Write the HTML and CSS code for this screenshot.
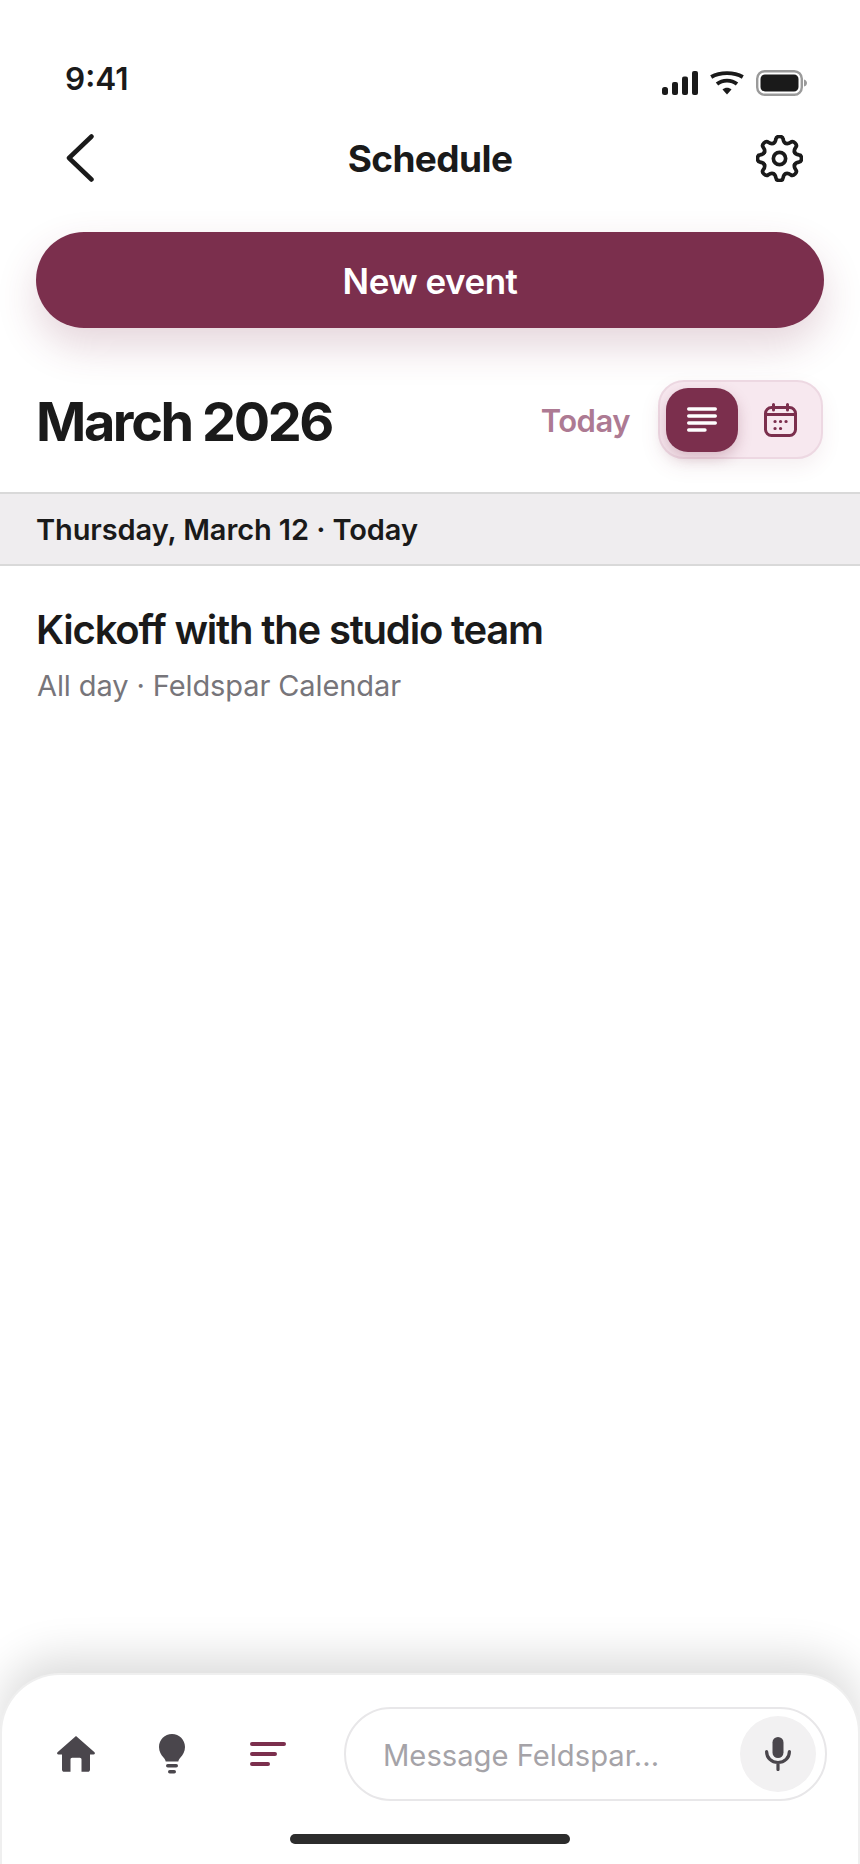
FILE: index.html
```html
<!DOCTYPE html>
<html lang="en">
<head>
    <meta charset="UTF-8">
    <meta name="viewport" content="width=device-width, initial-scale=1.0">
    <title>Schedule</title>
    <link rel="stylesheet" href="styles.css">
</head>
<body>
    <div class="status-bar">
        <span class="clock">9:41</span>
        <div class="status-icons">
            <svg width="36" height="24" viewBox="0 0 36 24" fill="#1a1a1a">
                <rect x="0" y="16" width="6" height="8" rx="2.5"/>
                <rect x="10" y="11" width="6" height="13" rx="2"/>
                <rect x="20" y="5.5" width="6" height="18.5" rx="2"/>
                <rect x="30" y="0" width="6" height="24" rx="2"/>
            </svg>
            <svg width="34" height="24" viewBox="0 0 34 24" fill="none" stroke="#1a1a1a" stroke-width="3.800">
                <path d="M1.200 6C10 .8 24 .8 32.800 6"/>
                <path d="M7 13C12.500 8.500 21.500 8.500 27 13"/>
                <path d="M17 23.500L12.500 18.500C15 16 19 16 21.500 18.500Z" fill="#1a1a1a" stroke="none"/>
            </svg>
            <svg width="51" height="26" viewBox="0 0 51 26">
                <rect x="1.2" y="1.2" width="44.600" height="23.600" rx="7.500" fill="none" stroke="#9a9a9a" stroke-width="2.400"/>
                <rect x="4.500" y="4.500" width="38" height="17" rx="4.500" fill="#1a1a1a"/>
                <path d="M48 9.500C50 10 51 11.500 51 13C51 14.500 50 16 48 16.500Z" fill="#9a9a9a"/>
            </svg>
        </div>
    </div>

    <div class="top-nav">
        <svg class="back-icon" width="47" height="48" viewBox="0 0 47 48" fill="none" stroke="#1a1a1a" stroke-width="4.500" stroke-linecap="round" stroke-linejoin="round">
            <path d="M34.500 2.500L12 24L34.500 45.500"/>
        </svg>
        <h1 class="page-title">Schedule</h1>
        <svg class="gear-icon" width="47" height="47" viewBox="1 1 46 46" fill="none" stroke="#1a1a1a" stroke-width="3.600" stroke-linecap="round">
            <path id="gear-tooth" d="M17.880 9.220C19.720 8.460 20.200 7 20.500 5C20.800 1.600 27.200 1.600 27.500 5C27.800 7 28.280 8.460 30.120 9.220"/>
            <use href="#gear-tooth" transform="rotate(45 24 24)"/>
            <use href="#gear-tooth" transform="rotate(90 24 24)"/>
            <use href="#gear-tooth" transform="rotate(135 24 24)"/>
            <use href="#gear-tooth" transform="rotate(180 24 24)"/>
            <use href="#gear-tooth" transform="rotate(225 24 24)"/>
            <use href="#gear-tooth" transform="rotate(270 24 24)"/>
            <use href="#gear-tooth" transform="rotate(315 24 24)"/>
            <circle cx="24" cy="24" r="6"/>
        </svg>
    </div>

    <button class="new-event" type="button">New event</button>

    <div class="month-row">
        <h2 class="month-title">March 2026</h2>
        <div class="month-actions">
            <span class="today-link">Today</span>
            <div class="view-switch">
                <div class="view-btn active">
                    <svg width="30" height="25" viewBox="0 0 30 25" fill="none" stroke="#fff" stroke-width="3.400" stroke-linecap="round">
                        <path d="M1.700 2H28.300M1.700 9H28.300M1.700 16H28.300M1.700 23H18"/>
                    </svg>
                </div>
                <div class="view-btn">
                    <svg width="33" height="34" viewBox="0 0 33 34" fill="none" stroke="#7b2f4d" stroke-width="3" stroke-linecap="round">
                        <rect x="1.500" y="4.500" width="30" height="28" rx="6"/>
                        <path d="M1.500 11.500H31.500M9.500 1.500V7M23.500 1.500V7"/>
                        <path d="M11 18.500H11.100M16.500 18.500H16.600M22 18.500H22.100M11 25.500H11.100M16.500 25.500H16.600" stroke-width="3.200"/>
                    </svg>
                </div>
            </div>
        </div>
    </div>

    <div class="day-header">Thursday, March 12 · Today</div>

    <div class="event-list">
        <div class="event">
            <div class="event-title">Kickoff with the studio team</div>
            <div class="event-meta">All day · Feldspar Calendar</div>
        </div>
    </div>

    <div class="bottom-panel">
        <div class="bottom-row">
            <div class="tab-icons">
                <svg width="48" height="36" viewBox="0 0 48 36" fill="#4a464c">
                    <path d="M24 0L42.500 16.200C43.400 17.100 42.800 18.500 41.500 18.500H38V33.500C38 34.900 37.100 35.800 35.700 35.800H29.500V23.500C29.500 22.500 28.900 21.800 27.800 21.800H20.200C19.100 21.800 18.500 22.500 18.500 23.500V35.800H12.300C10.900 35.800 10 34.900 10 33.500V18.500H6.500C5.200 18.500 4.600 17.100 5.500 16.200Z"/>
                </svg>
                <svg width="48" height="41" viewBox="0 0 48 41" fill="#4a464c">
                    <path d="M24 0C31.300 0 37 5.800 37 13C37 17.800 34.800 20.800 32.500 23.500C31.300 25 30.500 26.200 30.300 27.500H17.700C17.500 26.200 16.700 25 15.500 23.500C13.200 20.800 11 17.800 11 13C11 5.800 16.700 0 24 0Z"/>
                    <rect x="18" y="30" width="12" height="3.500" rx="1.750"/>
                    <rect x="20" y="36" width="8" height="3.500" rx="1.750"/>
                </svg>
                <svg width="48" height="26" viewBox="0 0 48 26" fill="none" stroke="#7b2f4d" stroke-width="4" stroke-linecap="round">
                    <path d="M8 3H40M8 13H31M8 23H24"/>
                </svg>
            </div>
            <div class="message-box">
                <span class="message-hint">Message Feldspar...</span>
                <div class="mic-btn">
                    <svg width="26" height="34" viewBox="0 0 26 34" fill="none" stroke="#4a464c" stroke-width="3.200" stroke-linecap="round">
                        <rect x="7.500" y="0" width="11" height="21" rx="5.500" fill="#4a464c" stroke="none"/>
                        <path d="M1.600 14.500C1.600 21 6.500 25.500 13 25.500C19.500 25.500 24.400 21 24.400 14.500M13 25.500V32.500"/>
                    </svg>
                </div>
            </div>
        </div>
        <div class="home-indicator"></div>
    </div>
</body>
</html>
```

FILE: styles.css
```css
* {
    box-sizing: border-box;
}
body {
    font-family: Inter, "Liberation Sans", sans-serif;
    background: #fff;
    color: #1a1a1a;
    margin: 0;
    padding: 0;
    display: flex;
    flex-direction: column;
    height: 100vh;
    overflow: hidden;
}
svg {
    display: block;
    flex-shrink: 0;
}
.status-bar {
    display: flex;
    justify-content: space-between;
    align-items: flex-start;
    height: 41px;
    margin-top: 60px;
    padding: 0 53px 0 65px;
}
.clock {
    font-size: 31.5px;
    font-weight: 600;
    line-height: 37px;
}
.status-icons {
    display: flex;
    align-items: center;
    gap: 12px;
    margin-top: 10px;
}
.top-nav {
    display: grid;
    grid-template-columns: 1fr auto 1fr;
    align-items: center;
    height: 70px;
    margin-top: 22px;
    padding: 0 57px;
}
.gear-icon {
    justify-self: end;
}
.page-title {
    font-size: 37px;
    font-weight: 700;
    letter-spacing: -0.6px;
    margin: 0;
}
.new-event {
    flex-shrink: 0;
    height: 96px;
    margin: 39px 36px 0;
    padding-top: 2px;
    background-color: #7b2f4d;
    color: #fff;
    font-family: inherit;
    font-size: 35px;
    font-weight: 600;
    letter-spacing: -0.5px;
    border: none;
    border-radius: 48px;
    box-shadow: 0 18px 40px rgba(123, 47, 77, 0.2);
}
.month-row {
    display: flex;
    justify-content: space-between;
    align-items: center;
    margin-top: 52px;
    padding: 0 37px 0 36px;
}
.month-title {
    font-size: 54px;
    font-weight: 700;
    letter-spacing: -2.4px;
    margin: 0;
    padding-top: 4px;
}
.month-actions {
    display: flex;
    align-items: center;
    gap: 28px;
}
.today-link {
    font-size: 31px;
    font-weight: 600;
    letter-spacing: -0.5px;
    color: #ad7a93;
    padding-top: 2px;
}
.view-switch {
    display: flex;
    align-items: center;
    width: 165px;
    height: 79px;
    padding: 0 6px;
    background: #f7e8ef;
    border: 2px solid #edd8e2;
    border-radius: 26px;
    box-shadow: 0 8px 20px rgba(123, 47, 77, 0.08);
}
.view-btn {
    display: flex;
    flex: none;
    justify-content: center;
    align-items: center;
    width: 68px;
    height: 64px;
    border-radius: 22px;
}
.view-btn.active {
    width: 72px;
    margin-right: 8px;
    background: #7b2f4d;
    box-shadow: 0 6px 14px rgba(123, 47, 77, 0.25);
}
.day-header {
    display: flex;
    align-items: center;
    height: 74px;
    margin-top: 33px;
    padding-left: 36px;
    background: #efedef;
    border-top: 2px solid #d9d9d9;
    border-bottom: 2px solid #d9d9d9;
    font-size: 29px;
    font-weight: 600;
    letter-spacing: -0.1px;
}
.event-list {
    flex: 1;
}
.event {
    padding: 39px 36px;
}
.event-title {
    font-size: 40px;
    font-weight: 600;
    letter-spacing: -1.2px;
    line-height: 50px;
}
.event-meta {
    margin-top: 13px;
    padding-left: 1px;
    font-size: 29px;
    letter-spacing: -0.1px;
    line-height: 36px;
    color: #77757a;
}
.bottom-panel {
    flex-shrink: 0;
    height: 191px;
    padding-top: 32px;
    background: #fff;
    border: 2px solid #efefef;
    border-bottom: none;
    border-radius: 60px 60px 0 0;
    box-shadow: 0 -16px 44px rgba(0, 0, 0, 0.14);
}
.bottom-row {
    display: flex;
    align-items: center;
    justify-content: space-between;
    padding: 0 31px 0 50px;
}
.tab-icons {
    display: flex;
    align-items: center;
    gap: 48px;
}
.message-box {
    display: flex;
    justify-content: space-between;
    align-items: center;
    width: 483px;
    height: 94px;
    padding: 0 9px 0 37px;
    border: 2px solid #e8e7e9;
    border-radius: 47px;
}
.message-hint {
    font-size: 29.2px;
    color: #a5a3a8;
    padding-top: 2px;
}
.mic-btn {
    display: flex;
    justify-content: center;
    align-items: center;
    width: 76px;
    height: 76px;
    background: #f2f1f2;
    border-radius: 50%;
}
.home-indicator {
    width: 280px;
    height: 10px;
    margin: 33px auto 0;
    background: #2c2c2c;
    border-radius: 5px;
}
```
